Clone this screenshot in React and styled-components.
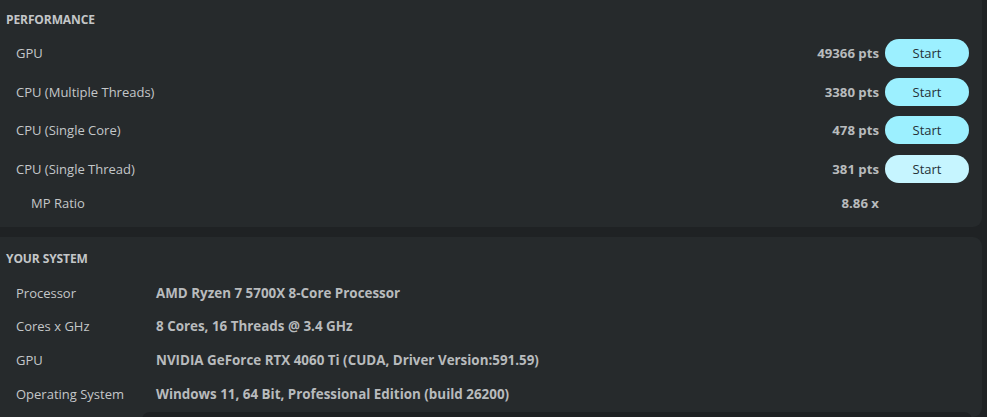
import React from "react";
import styled, { createGlobalStyle } from "styled-components";

const scores = [
  { id: "gpu", label: "GPU", value: "49366 pts", light: false },
  { id: "mt", label: "CPU (Multiple Threads)", value: "3380 pts", light: false },
  { id: "sc", label: "CPU (Single Core)", value: "478 pts", light: false },
  { id: "st", label: "CPU (Single Thread)", value: "381 pts", light: true },
];

const system = [
  { label: "Processor", value: "AMD Ryzen 7 5700X 8-Core Processor" },
  { label: "Cores x GHz", value: "8 Cores, 16 Threads @ 3.4 GHz" },
  { label: "GPU", value: "NVIDIA GeForce RTX 4060 Ti (CUDA, Driver Version:591.59)" },
  { label: "Operating System", value: "Windows 11, 64 Bit, Professional Edition (build 26200)" },
];

export default function App() {
  return (
    <>
      <GlobalStyle />
      <Page>
        <Panel $top>
          <SectionTitle>Performance</SectionTitle>
          <ScoreList>
            {scores.map((s) => (
              <ScoreRow key={s.id}>
                <Label>{s.label}</Label>
                <Score>{s.value}</Score>
                <StartButton $light={s.light}>Start</StartButton>
              </ScoreRow>
            ))}
            <RatioRow>
              <Label $indent>MP Ratio</Label>
              <Score>8.86 x</Score>
              <span />
            </RatioRow>
          </ScoreList>
        </Panel>
        <Panel>
          <SectionTitle>Your System</SectionTitle>
          <InfoList>
            {system.map((row) => (
              <InfoRow key={row.label}>
                <Label>{row.label}</Label>
                <Value>{row.value}</Value>
              </InfoRow>
            ))}
          </InfoList>
          <InfoBox />
        </Panel>
      </Page>
    </>
  );
}

const GlobalStyle = createGlobalStyle`
  html, body {
    margin: 0;
    padding: 0;
    background: #1f2224;
    overflow: hidden;
  }
  body {
    font-family: "Open Sans", "Noto Sans", sans-serif;
    font-size: 13px;
    color: #c6c9cb;
  }
`;

const Page = styled.div`
  display: flex;
  flex-direction: column;
  gap: 10px;
  width: 982px;
  height: 424px;
  margin-top: -7px;
`;

const Panel = styled.section`
  display: flex;
  flex-direction: column;
  background: #262a2c;
  border-radius: 0 9px 9px 0;
  padding: ${(p) => (p.$top ? "16px 0 15px 0" : "11px 0 0 0")};
  flex: ${(p) => (p.$top ? "0 0 auto" : "1 1 auto")};
  overflow: hidden;
`;

const SectionTitle = styled.h2`
  margin: 0 0 0 6px;
  font-size: 12px;
  font-weight: 700;
  text-transform: uppercase;
  letter-spacing: -0.1px;
  color: #c3c6c8;
  line-height: 22px;
`;

const ScoreList = styled.div`
  display: flex;
  flex-direction: column;
  gap: 10.7px;
  padding: 8px 0 0 16px;
`;

const ScoreRow = styled.div`
  display: grid;
  grid-template-columns: 1fr auto 84px;
  align-items: center;
  column-gap: 6px;
  padding-right: 13px;
  height: 28px;
`;

const RatioRow = styled(ScoreRow)`
  height: 18px;
`;

const Label = styled.span`
  font-weight: 400;
  color: #c4c7c9;
  padding-left: ${(p) => (p.$indent ? "15px" : "0")};
  white-space: nowrap;
`;

const Score = styled.span`
  font-weight: 700;
  font-size: 13.2px;
  color: #b8bbbd;
  text-align: right;
`;

const StartButton = styled.button`
  height: 28px;
  border: none;
  border-radius: 14px;
  background: ${(p) => (p.$light ? "#c6f5ff" : "#9cf0ff")};
  color: #253238;
  font-family: inherit;
  font-size: 13px;
  padding: 0;
  cursor: pointer;
`;

const InfoList = styled.div`
  display: flex;
  flex-direction: column;
  gap: 13.7px;
  padding: 13px 0 0 16px;
`;

const InfoRow = styled.div`
  display: grid;
  grid-template-columns: 140px 1fr;
  align-items: center;
  height: 20px;
`;

const Value = styled.span`
  font-weight: 700;
  font-size: 13.4px;
  color: #b8bbbd;
  white-space: nowrap;
`;

const InfoBox = styled.div`
  margin: 8px 10px 0 142px;
  flex: 1;
  min-height: 20px;
  background: #1e2123;
  border-radius: 8px 8px 0 0;
`;
